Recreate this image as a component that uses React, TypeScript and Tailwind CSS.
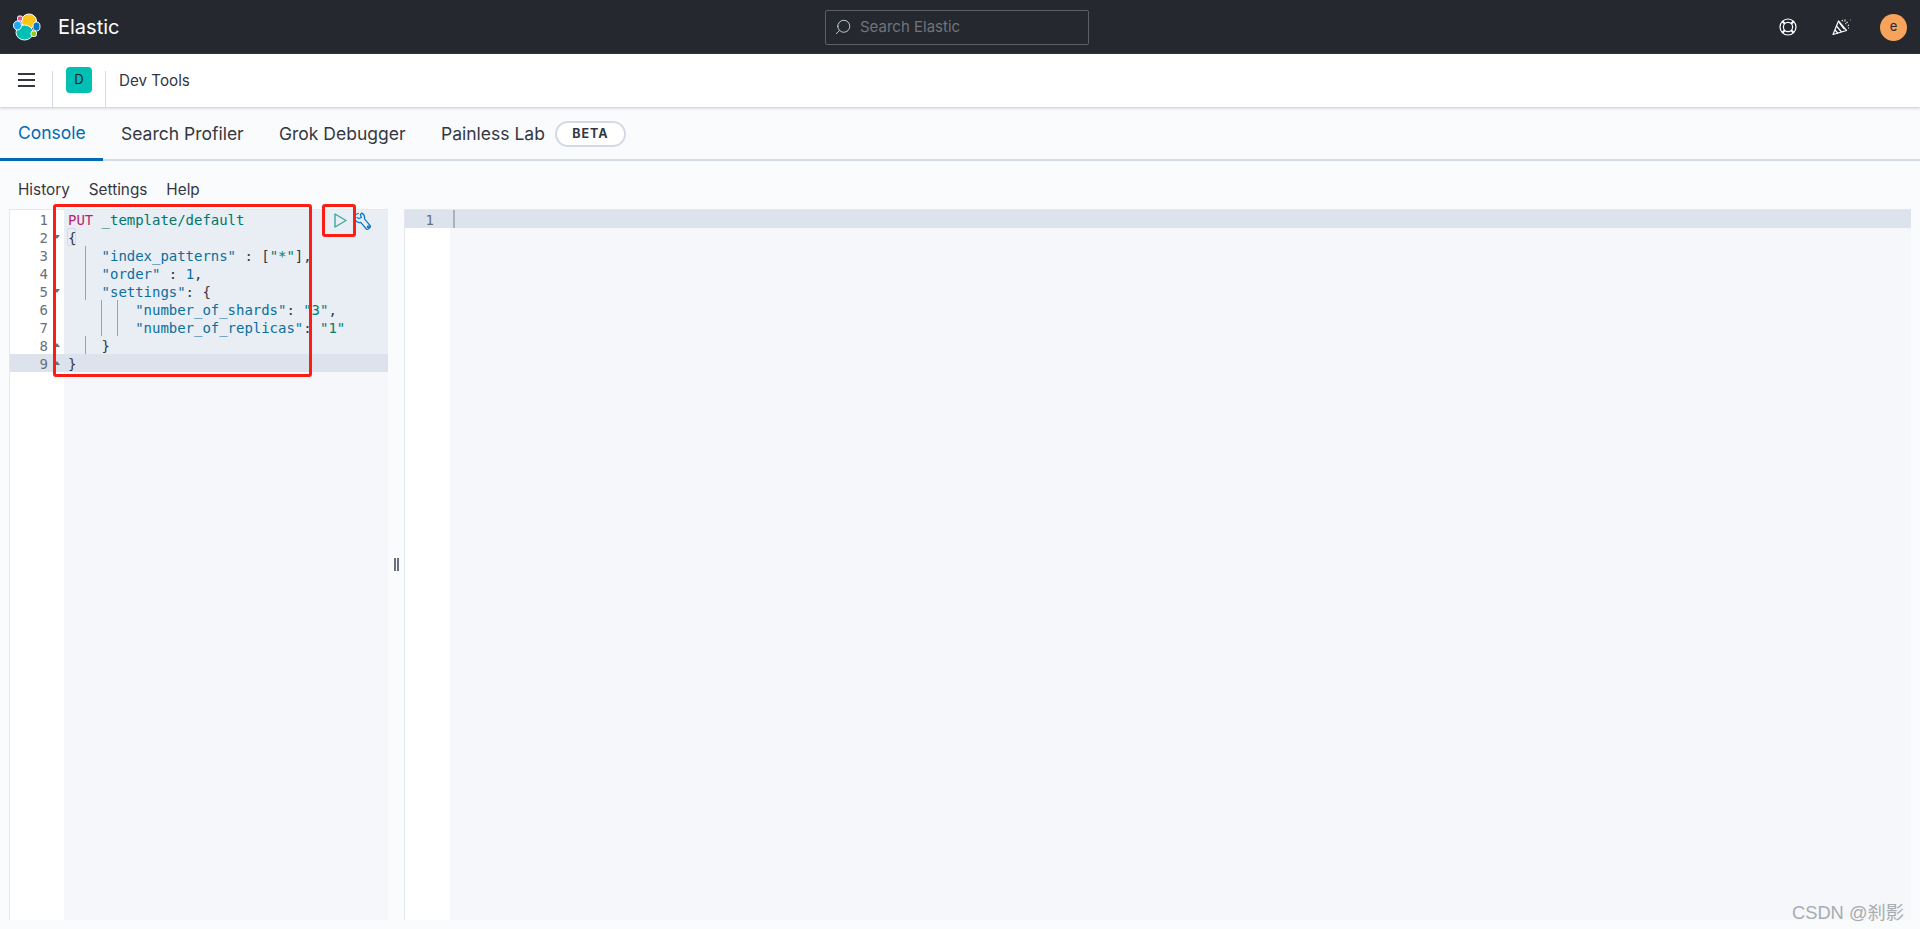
import { Search } from "lucide-react";

const tabs = [
    { name: "Console", cls: "w-[103px] pl-[18px] pt-[2px] text-[#006bb4] border-b-[3px] border-[#006bb4]" },
    { name: "Search Profiler", cls: "w-[158px] pl-[18px]" },
    { name: "Grok Debugger", cls: "w-[162px] pl-[18px]" },
    { name: "Painless Lab", cls: "pl-[18px]" },
];

const Key = ({ children }: { children: string }) => <span className="text-[#0b6f9e]">{children}</span>;
const Str = ({ children }: { children: string }) => <span className="text-[#017d73]">{children}</span>;
const Punc = ({ children }: { children: string }) => <span className="text-[#343741]">{children}</span>;

const codeLines = [
    { guides: "", fold: "", code: <><span className="text-[#bc1e70]">PUT</span> <span className="text-[#00756c]">_template/default</span></> },
    { guides: "", fold: "down", code: <span className="-ml-[1px] inline-block h-[18px] w-[9px] rounded-[2px] border border-[#d3dae6] leading-[18px]"><Punc>{"{"}</Punc></span> },
    { guides: "one", fold: "", code: <>{"    "}<Key>"index_patterns"</Key> <Punc>:</Punc> <Punc>[</Punc><Str>"*"</Str><Punc>],</Punc></> },
    { guides: "one", fold: "", code: <>{"    "}<Key>"order"</Key> <Punc>:</Punc> <Key>1</Key><Punc>,</Punc></> },
    { guides: "one", fold: "down", code: <>{"    "}<Key>"settings"</Key><Punc>:</Punc> <Punc>{"{"}</Punc></> },
    { guides: "two", fold: "", code: <>{"        "}<Key>"number_of_shards"</Key><Punc>:</Punc> <Str>"3"</Str><Punc>,</Punc></> },
    { guides: "two", fold: "", code: <>{"        "}<Key>"number_of_replicas"</Key><Punc>:</Punc> <Str>"1"</Str></> },
    { guides: "one", fold: "up", code: <>{"    "}<Punc>{"}"}</Punc></> },
    { guides: "", fold: "up", code: <Punc>{"}"}</Punc> },
];

const ElasticLogo = () => (
    <svg width="28" height="28" viewBox="0 0 28 28" className="shrink-0">
        <ellipse cx="16" cy="8" rx="7.5" ry="7" fill="#fec514" stroke="#fff" strokeWidth="1" />
        <ellipse cx="11.5" cy="19.5" rx="8.5" ry="7.5" fill="#00bfb3" stroke="#fff" strokeWidth="1" />
        <rect x="4.5" y="3" width="5" height="5" rx="1.5" fill="#f04e98" stroke="#fff" strokeWidth="1" />
        <ellipse cx="4.5" cy="12.5" rx="4" ry="4.5" fill="#1ba9f5" stroke="#fff" strokeWidth="1" />
        <ellipse cx="23.5" cy="13.5" rx="3.5" ry="4.5" fill="#0077cc" stroke="#fff" strokeWidth="1" />
        <rect x="18" y="18" width="5.5" height="5.5" rx="2" fill="#93c90e" stroke="#fff" strokeWidth="1" />
    </svg>
);

const HelpRing = () => (
    <svg width="18" height="18" viewBox="0 0 18 18" fill="none" stroke="#fff" strokeWidth="1.2">
        <circle cx="9" cy="9" r="8" />
        <circle cx="9" cy="9" r="4.6" />
        <path d="M3.3 3.3l2.5 2.5M14.7 3.3l-2.5 2.5M3.3 14.7l2.5-2.5M14.7 14.7l-2.5-2.5" strokeWidth="2" />
    </svg>
);

const Party = () => (
    <svg width="19" height="18" viewBox="0 0 19 18" fill="none" stroke="#fff" strokeWidth="1.2">
        <path d="M1 16.5L6.5 3l8 9.5z" strokeLinejoin="round" />
        <path d="M4.5 8l5 6M3 12l3 3.5M7.5 5l4.5 6" />
        <path d="M10 2l1 2M13 1.5v2.5M15.5 4l-2 2M17 7l-2 1M18 2h.5M16 10h1" strokeDasharray="1.2 .8" />
    </svg>
);

const PlayIcon = () => (
    <svg width="13" height="15" viewBox="0 0 13 15" fill="none" stroke="#3ba99f" strokeWidth="1.4" strokeLinejoin="round">
        <path d="M1 1v13l11-6.5z" />
    </svg>
);

const WrenchIcon = () => (
    <svg width="19" height="19" viewBox="0 0 18 18" fill="none" stroke="#0077cc" strokeWidth="1.15" strokeLinejoin="round">
        <path d="M4.6 1.2C2 1.7.4 3.9.8 6.3c.5 2.7 3.1 4.2 5.6 3.6l5.3 6.2c1.2 1.2 4.7-1.8 3.6-3.2L9.9 6.6C10.4 3.9 9 1.9 7.2 1.1L6 2.6l1 2.6-2.5 1-2-1.2" />
        <circle cx="13.6" cy="14" r="0.9" />
    </svg>
);

export default function App() {
    return (
        <div className="relative flex h-[929px] w-full flex-col overflow-hidden bg-[#fafbfd] font-['Inter',sans-serif] text-[#343741]">
            {/* chrome */}
            <header className="flex h-[54px] shrink-0 items-center justify-between bg-[#25282f] px-[13px]">
                <div className="flex w-[400px] items-center gap-[17px]">
                    <ElasticLogo />
                    <span className="text-[20px] text-white">Elastic</span>
                </div>
                <div className="mr-[6px] flex h-[35px] w-[264px] items-center gap-[8px] rounded-[2px] border border-[#5e6066] pl-[8px]">
                    <Search size={18} strokeWidth={1.2} className="-scale-x-100 text-[#d4dae5]" />
                    <span className="pt-[1px] text-[15px] text-[#70747c]">Search Elastic</span>
                </div>
                <div className="flex w-[400px] items-center justify-end">
                    <HelpRing />
                    <span className="ml-[35px]"><Party /></span>
                    <div className="ml-[29px] flex h-[27px] w-[27px] items-center justify-center rounded-full bg-[#f7a35c] text-[13px] text-[#25282f]">e</div>
                </div>
            </header>

            <div className="z-10 flex h-[53px] shrink-0 bg-white shadow-[0_1px_3px_rgba(152,162,179,0.6)]">
                <div className="flex w-[52px] shrink-0 items-center pb-[1px] pl-[18px]">
                    <div className="flex w-[17px] flex-col gap-[4px]">
                        <span className="h-[2px] bg-[#343741]" />
                        <span className="h-[2px] bg-[#343741]" />
                        <span className="h-[2px] bg-[#343741]" />
                    </div>
                </div>
                <div className="relative w-[54px] shrink-0">
                    <span className="absolute top-[17px] bottom-0 left-0 w-px bg-[#d3dae6]" />
                    <span className="absolute top-[17px] bottom-0 right-0 w-px bg-[#d3dae6]" />
                    <div className="mx-auto mt-[13px] flex h-[26px] w-[26px] items-center justify-center rounded-[4px] bg-[#00bfb3] text-[13px] text-[#1a1c21]">D</div>
                </div>
                <span className="ml-[13px] self-center pt-[1px] text-[15.2px] text-[#343741]">Dev Tools</span>
            </div>

            {/* tabs */}
            <nav className="flex h-[54px] shrink-0 items-stretch border-b-2 border-[#d3dae6]">
                {tabs.map((tab) => (
                    <div key={tab.name} className={`-mb-[2px] flex items-center text-[17.5px] ${tab.cls}`}>
                        {tab.name}
                    </div>
                ))}
                <div className="mt-[14px] ml-[10px] flex h-[26px] w-[71px] items-center justify-center rounded-full border-2 border-[#d3dae6] bg-white text-[12.5px] font-bold tracking-[1px] text-[#343741]">
                    BETA
                </div>
            </nav>

            <div className="flex h-[48px] shrink-0 items-end gap-[19px] pb-[7px] pl-[18px] text-[15.3px]">
                <span>History</span>
                <span>Settings</span>
                <span>Help</span>
            </div>

            {/* editors */}
            <div className="flex min-h-0 flex-1 pr-[9px] pb-[9px] pl-[9px]">
                <div className="relative flex w-[379px] shrink-0 border-t border-l border-[#e4e8f0] font-['DejaVu_Sans_Mono',monospace] text-[14px] leading-[20px] tracking-[-0.03px]">
                    <div className="w-[54px] shrink-0 bg-white">
                        {codeLines.map((line, i) => (
                            <div key={i} className={`relative h-[18px] pr-[16px] text-right text-[#69707d] ${i === 8 ? "bg-[#dde3ec]" : ""}`}>
                                {i + 1}
                                {line.fold === "down" && <span className="absolute top-[7px] right-[4px] h-0 w-0 border-x-[3px] border-t-[4px] border-x-transparent border-t-[#69707d]" />}
                                {line.fold === "up" && <span className="absolute top-[7px] right-[4px] h-0 w-0 border-x-[3px] border-b-[4px] border-x-transparent border-b-[#69707d]" />}
                            </div>
                        ))}
                    </div>
                    <div className="min-w-0 flex-1 bg-[#f5f7fa]">
                        {codeLines.map((line, i) => (
                            <div key={i} className={`relative h-[18px] pl-[4px] whitespace-pre ${i === 8 ? "bg-[#dde3ec]" : "bg-[#e9edf4]"}`}>
                                {line.guides === "one" && <span className="absolute top-0 bottom-0 left-[21px] w-px bg-[#98a2b3]" />}
                                {line.guides === "two" && <span className="absolute top-0 bottom-0 left-[37px] w-px bg-[#98a2b3]" />}
                                {line.guides === "two" && <span className="absolute top-0 bottom-0 left-[53px] w-px bg-[#98a2b3]" />}
                                <span className="relative z-10">{line.code}</span>
                            </div>
                        ))}
                    </div>
                    <span className="absolute top-[3px] left-[324px] z-10"><PlayIcon /></span>
                    <span className="absolute top-[2px] left-[344px] z-10"><WrenchIcon /></span>
                </div>

                <div className="flex w-[16px] shrink-0 items-center justify-center gap-[1px]">
                    <span className="h-[13px] w-[2px] bg-[#69707d]" />
                    <span className="h-[13px] w-[2px] bg-[#69707d]" />
                </div>

                <div className="flex min-w-0 flex-1 border-t border-l border-[#e4e8f0] font-['DejaVu_Sans_Mono',monospace] text-[14px] leading-[20px]">
                    <div className="w-[45px] shrink-0 bg-white">
                        <div className="h-[18px] bg-[#dde3ec] pr-[16px] text-right text-[#69707d]">1</div>
                    </div>
                    <div className="min-w-0 flex-1 bg-[#f5f7fa]">
                        <div className="h-[18px] bg-[#dde3ec] pl-[3px]">
                            <span className="block h-[18px] w-[2px] bg-[#aab2bd]" />
                        </div>
                    </div>
                </div>
            </div>

            {/* red annotation boxes and watermark sit over the screenshot */}
            <div className="absolute top-[204px] left-[53px] z-20 h-[173px] w-[259px] rounded-[3px] border-[3px] border-[#fa1e14]" />
            <div className="absolute top-[204px] left-[322px] z-20 h-[33px] w-[34px] rounded-[3px] border-[3px] border-[#fa1e14]" />
            <div className="absolute top-[899px] left-[1792px] font-['Liberation_Sans','Noto_Sans_CJK_SC',sans-serif] text-[18.3px] text-[#a8abb0]">CSDN @刹影</div>
        </div>
    );
}
